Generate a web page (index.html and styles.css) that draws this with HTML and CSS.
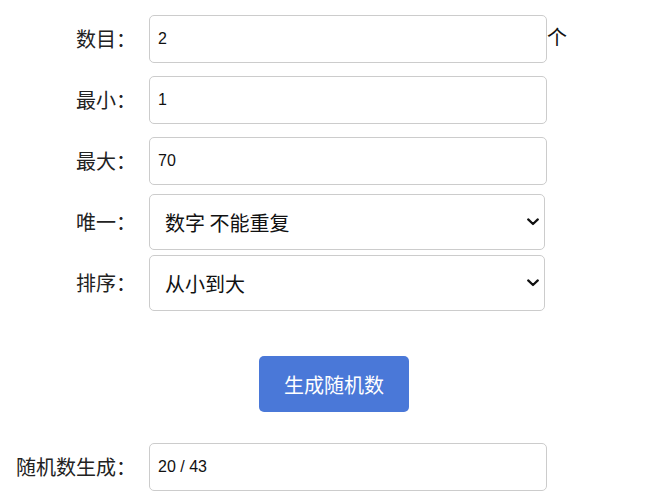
FILE: index.html
```html
<!DOCTYPE html>
<html lang="zh-CN">
<head>
<meta charset="utf-8">
<title>随机数生成</title>
<link rel="stylesheet" href="styles.css">
</head>
<body>
<form class="form">
  <div class="row row-count">
    <label class="label" for="count">数目：</label>
    <input class="field" id="count" type="text" value="2"><span class="unit">个</span>
  </div>
  <div class="row row-input">
    <label class="label" for="min">最小：</label>
    <input class="field" id="min" type="text" value="1">
  </div>
  <div class="row row-input-last">
    <label class="label" for="max">最大：</label>
    <input class="field" id="max" type="text" value="70">
  </div>
  <div class="row row-select">
    <label class="label" for="unique">唯一：</label>
    <div class="select-wrap">
      <select class="choice" id="unique">
        <option>数字 不能重复</option>
        <option>数字 可以重复</option>
      </select>
      <svg class="chevron" width="12" height="8" viewBox="0 0 12 8" aria-hidden="true"><path d="M1.2 1.4 L6 6 L10.8 1.4" fill="none" stroke="#111" stroke-width="2.2" stroke-linecap="round" stroke-linejoin="round"/></svg>
    </div>
  </div>
  <div class="row row-select-last">
    <label class="label" for="sort">排序：</label>
    <div class="select-wrap">
      <select class="choice" id="sort">
        <option>从小到大</option>
        <option>从大到小</option>
        <option>不排序</option>
      </select>
      <svg class="chevron" width="12" height="8" viewBox="0 0 12 8" aria-hidden="true"><path d="M1.2 1.4 L6 6 L10.8 1.4" fill="none" stroke="#111" stroke-width="2.2" stroke-linecap="round" stroke-linejoin="round"/></svg>
    </div>
  </div>
  <div class="actions">
    <button class="btn" type="button">生成随机数</button>
  </div>
  <div class="row">
    <label class="label" for="result">随机数生成：</label>
    <input class="field" id="result" type="text" value="20 / 43">
  </div>
</form>
</body>
</html>
```
FILE: styles.css
```css
html, body {
  margin: 0;
  padding: 0;
  background: #fff;
}
body {
  padding: 15px 8px 0 8px;
  font-family: "Liberation Sans", "Noto Sans CJK SC", sans-serif;
  color: #222;
}
.form {
  display: flex;
  flex-direction: column;
}
.row {
  display: flex;
  align-items: center;
}
.row-count, .row-input { margin-bottom: 13px; }
.row-input-last { margin-bottom: 9px; }
.row-select { margin-bottom: 5px; }
.row-select-last { margin-bottom: 45px; }
.label {
  width: 128px;
  margin-right: 13px;
  text-align: right;
  font-family: "Noto Sans CJK SC", sans-serif;
  font-size: 20px;
  line-height: 24px;
  color: #222;
}
.field {
  box-sizing: border-box;
  width: 398px;
  height: 48px;
  margin: 0;
  padding: 0 8px;
  border: 1px solid #ccc;
  border-radius: 5px;
  font-family: "Liberation Sans", Arial, sans-serif;
  font-size: 16px;
  color: #111;
  background: #fff;
  outline: none;
}
.unit {
  align-self: flex-start;
  margin-top: 10px;
  font-family: "Noto Sans CJK SC", sans-serif;
  font-size: 20px;
  line-height: 24px;
  color: #111;
}
.select-wrap {
  position: relative;
  width: 396px;
  height: 56px;
}
.choice {
  box-sizing: border-box;
  width: 396px;
  height: 56px;
  margin: 0;
  padding: 0 30px 0 15px;
  border: 1px solid #ccc;
  border-radius: 5px;
  font-family: "Noto Sans CJK SC", sans-serif;
  font-size: 20px;
  color: #111;
  background-color: #fff;
  -webkit-appearance: none;
  appearance: none;
  outline: none;
}
.chevron {
  position: absolute;
  right: 6px;
  top: 24px;
  pointer-events: none;
}
.actions {
  display: flex;
  justify-content: center;
  padding-left: 14px;
  margin-bottom: 31px;
}
.btn {
  box-sizing: border-box;
  width: 150px;
  height: 56px;
  margin: 0;
  padding: 0;
  border: none;
  border-radius: 5px;
  background: #4a78d8;
  color: #fff;
  font-family: "Noto Sans CJK SC", sans-serif;
  font-size: 20px;
}
```
